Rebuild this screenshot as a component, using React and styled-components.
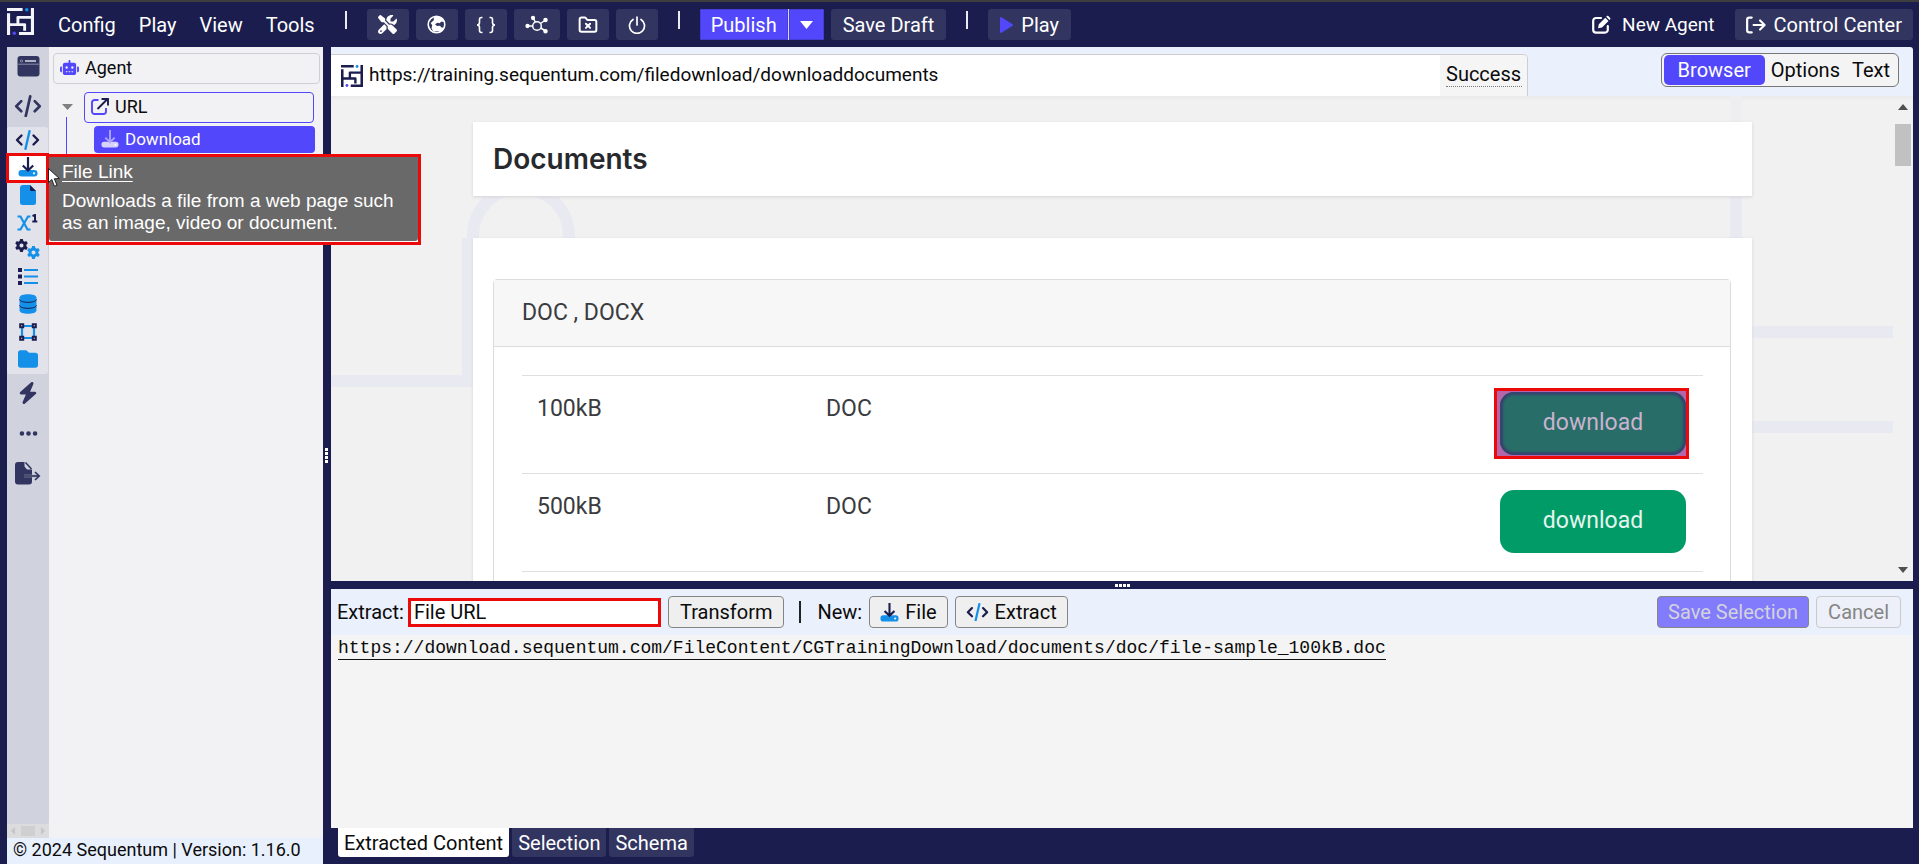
import React from "react";
import styled, { createGlobalStyle, css } from "styled-components";
import { FaRobot, FaFolder, FaEllipsis, FaBolt, FaGear, FaScrewdriverWrench } from "react-icons/fa6";
import { LuFolderX } from "react-icons/lu";

const navy = "#1a1d4d";
const violet = "#5247fa";
const blue = "#1590e9";
const red = "#ec0909";
const slate = "#32355f";

const Global = createGlobalStyle`
  *, *::before, *::after { box-sizing: border-box; }
  body { margin: 0; background: ${navy}; font-family: Roboto, "Liberation Sans", sans-serif; font-size: 20px; color: #0b0b0b; }
  button, input { font: inherit; color: inherit; margin: 0; }
  button { cursor: pointer; }
  svg { display: block; flex: none; }
  h1, h2, p { margin: 0; font-weight: 400; }
`;

/* ---------- frame ---------- */
const Shell = styled.div`
  height: 100vh;
  display: flex;
  flex-direction: column;
  border-top: 2px solid #3e3e3f;
  background: ${navy};
`;
const TopBar = styled.header`
  height: 45px;
  flex: none;
  display: flex;
  align-items: center;
  padding: 0 6px 6px 7px;
  color: #fff;
`;
const Main = styled.main`
  flex: 1;
  min-height: 0;
  display: flex;
  padding: 0 6px 0 7px;
`;

/* ---------- top bar ---------- */
const Menu = styled.nav`
  display: flex;
  gap: 23px;
  margin: 0 10px 0 24px;
`;
const MenuItem = styled.button`
  border: 0;
  padding: 7px 0 0;
  background: none;
  color: #fff;
  line-height: 24px;
`;
const Divider = styled.span`
  width: 2px;
  height: 18px;
  flex: none;
  background: #e8ecf5;
  margin: 0 20px 4px;
`;
const ToolButton = styled.button`
  height: 31px;
  min-width: 42px;
  border: 0;
  border-radius: 3px;
  background: ${slate};
  color: #fff;
  padding: 0 ${(p) => p.$pad || 11}px;
  display: flex;
  align-items: center;
  justify-content: center;
  gap: 8px;
  white-space: nowrap;
`;
const Group = styled.div`
  display: flex;
  align-items: center;
  gap: ${(p) => p.$gap || 7}px;
  padding-top: 6px;
`;
const Split = styled.div`
  display: flex;
  gap: 1px;
  background: #d8d8ff;
  border-radius: 3px;
  overflow: hidden;
`;
const SplitButton = styled.button`
  border: 1px solid #463cd8;
  background: ${violet};
  color: #fff;
  height: 31px;
  width: ${(p) => p.$w}px;
  padding: 0;
  display: flex;
  align-items: center;
  justify-content: center;
`;
const PlainLink = styled.a`
  color: #fff;
  text-decoration: none;
  display: flex;
  align-items: center;
  gap: 11px;
  font-size: 19px;
`;
const Spacer = styled.div`flex: 1;`;

/* ---------- left side ---------- */
const Left = styled.section`
  width: 316px;
  flex: none;
  display: flex;
  flex-direction: column;
  background: #f2f2f5;
  position: relative;
`;
const LeftBody = styled.div`
  flex: 1;
  min-height: 0;
  display: flex;
`;
const Rail = styled.div`
  width: 42px;
  display: flex;
  flex-direction: column;
  background: #dcdcdf;
`;
const RailIcons = styled.div`
  flex: 1;
  background: #d0d3dd;
  border-radius: 0 0 3px 0;
  color: ${slate};
`;
const RailButton = styled.button`
  border: 0;
  background: none;
  padding: 0 0 2px;
  width: 42px;
  height: 40px;
  display: flex;
  align-items: center;
  justify-content: center;
`;
const SubRail = styled.div`
  height: 247px;
  width: 41px;
  background: #e2e3ea;
  border-radius: 3px;
  display: flex;
  flex-direction: column;
`;
const SubButton = styled.button`
  flex: 1;
  min-height: 0;
  border: 0;
  background: none;
  padding: 0 0 2px;
  display: flex;
  align-items: center;
  justify-content: center;
  ${(p) => p.$active && css`
    background: #fff;
    outline: 3px solid ${red};
    outline-offset: -2px;
    z-index: 1;
  `}
`;
const RailScroll = styled.div`
  height: 14px;
  display: flex;
  align-items: center;
  justify-content: center;
  gap: 6px;
`;
const RailThumb = styled.i`
  width: 14px;
  height: 10px;
  background: #cfcfcf;
`;
const Tree = styled.div`
  flex: 1;
  padding: 6px 3px 0 4px;
  font-size: 18px;
`;
const TreeBox = styled.div`
  display: flex;
  align-items: center;
  height: 31px;
  border-radius: 4px;
  padding: 0 6px 2px;
  gap: 6px;
  border: 1px solid ${(p) => (p.$accent ? violet : "#cfcfd6")};
`;
const TreeRow = styled.div`
  display: grid;
  grid-template-columns: 31px 1fr;
  padding-right: 6px;
  margin-top: 8px;
`;
const Guide = styled.div`
  display: flex;
  flex-direction: column;
  align-items: flex-start;
  padding: 12px 0 0 9px;
`;
const GuideLine = styled.i`
  width: 1px;
  height: 37px;
  background: ${violet};
  margin: 7px 0 0 4px;
`;
const TreeChild = styled.div`
  display: flex;
  align-items: center;
  height: 27px;
  margin: 3px -1px 0 10px;
  padding: 0 7px 2px;
  gap: 6px;
  border-radius: 4px;
  background: ${violet};
  color: #fff;
  font-size: 17px;
`;
const Footer = styled.footer`
  height: 26px;
  background: #e9f0fd;
  font-size: 18px;
  line-height: 24px;
  padding-left: 6px;
  white-space: nowrap;
`;
const Tooltip = styled.div`
  position: absolute;
  left: 39px;
  top: 107px;
  width: 375px;
  height: 91px;
  border: 3px solid ${red};
  background: #fff;
  z-index: 3;
  color: #fff;
  font-family: "Liberation Sans", Arial, sans-serif;
  font-size: 19px;
  line-height: 22px;
`;
const TooltipBody = styled.div`
  background: #696969;
  border-radius: 0 0 3px 3px;
  height: 84px;
  padding: 4px 13px;
  h2 { font-size: 19px; text-decoration: underline; text-underline-offset: 3px; margin-bottom: 7px; line-height: 22px; }
`;
const Cursor = styled.svg`
  position: absolute;
  left: 41px;
  top: 121px;
  z-index: 4;
`;

/* ---------- splitters ---------- */
const Grip = styled.div`
  flex: none;
  display: flex;
  align-items: center;
  justify-content: center;
  flex-direction: ${(p) => (p.$vertical ? "column" : "row")};
  gap: 1px;
  ${(p) => (p.$vertical ? "width: 8px; padding-right: 1px;" : "height: 8px;")}
  i { width: 3px; height: 3px; background: #fff; }
`;

/* ---------- right side ---------- */
const Right = styled.section`
  flex: 1;
  min-width: 0;
  display: flex;
  flex-direction: column;
`;
const AddressRow = styled.div`
  height: 49px;
  flex: none;
  display: flex;
  background: #ebf0fd;
  border-radius: 0 3px 0 0;
  padding-top: 7px;
`;
const Address = styled.div`
  flex: 0 1 1197px;
  display: flex;
  border: solid #cdcdd2;
  border-width: 1px 1px 0 0;
  border-radius: 0 5px 0 0;
  background: #fff;
  overflow: hidden;
`;
const LogoSlot = styled.span`
  display: flex;
  align-items: center;
  padding-left: 10px;
`;
const AddressText = styled.input`
  flex: 1;
  min-width: 0;
  border: 0;
  padding: 0 0 2px 6px;
  font-size: 19px;
  background: none;
  outline: none;
`;
const Status = styled.div`
  width: 87px;
  background: #f5f5f5;
  padding: 8px 5px 0 6px;
  span { display: block; line-height: 23px; border-bottom: 1px dotted #777; }
`;
const Tabs = styled.div`
  margin: -1px 14px 0 0;
  height: 34px;
  display: flex;
  align-items: center;
  background: #f4f4f4;
  border: 1px solid #777;
  border-radius: 6px;
  padding: 0 2px;
`;
const Tab = styled.button`
  height: 30px;
  border: 0;
  border-radius: 5px;
  padding: 0 ${(p) => (p.$on ? 14 : 6)}px;
  background: ${(p) => (p.$on ? violet : "transparent")};
  color: ${(p) => (p.$on ? "#fff" : "inherit")};
`;
const Viewport = styled.div`
  flex: 1;
  min-height: 0;
  display: flex;
  position: relative;
  overflow: hidden;
  background: #f1f1f1;
  box-shadow: inset 0 3px 3px #ebebeb;
  color: #3a3b3e;
  font-size: 23px;
`;
const Decor = styled.svg`
  position: absolute;
  inset: 0;
  width: 100%;
  height: 100%;
`;
const Doc = styled.div`
  flex: 1;
  position: relative;
  padding: 26px 143px 0 142px;
`;
const TitleCard = styled.div`
  background: #fff;
  height: 74px;
  padding: 0 20px;
  box-shadow: 0 1px 3px #d4d4d8;
  h1 { font-family: Inter, Roboto, sans-serif; font-weight: 600; font-size: 28px; line-height: 74px; color: #28292d; }
`;
const BodyCard = styled.div`
  background: #fff;
  margin-top: 42px;
  padding: 41px 21px 0 20px;
  box-shadow: 0 1px 3px #d4d4d8;
  height: 600px;
`;
const Panel = styled.div`
  border: 1px solid #dcdcde;
  border-radius: 4px;
  height: 540px;
`;
const PanelHead = styled.div`
  height: 67px;
  background: #f7f7f7;
  border-bottom: 1px solid #dcdcde;
  padding-left: 28px;
  line-height: 65px;
`;
const Table = styled.table`
  width: calc(100% - 55px);
  margin: 28px 27px 0 28px;
  border-collapse: collapse;
  table-layout: fixed;
  td { height: 98px; padding: 18px 15px; border-top: 1px solid #dfdfe1; vertical-align: top; line-height: 30px; }
  td:first-child { width: 289px; }
  td:last-child { width: 240px; padding: 16px 17px 0 0; }
`;
const Pick = styled.div`
  position: relative;
  z-index: 0;
  width: 186px;
  margin-left: auto;
`;
const Download = styled.a`
  display: block;
  height: 63px;
  border-radius: 14px;
  background: ${(p) => (p.$picked ? "#286d67" : "#009b67")};
  color: ${(p) => (p.$picked ? "#c9b3cf" : "#e4f5ee")};
  line-height: 62px;
  text-align: center;
  text-decoration: none;
  ${(p) => p.$picked && css`box-shadow: inset 0 0 2px 3px #36446f;`}
`;
const PickFrame = styled.div`
  position: absolute;
  inset: -4px -3px -4px -6px;
  border: 3px solid ${red};
  background: #b566ab;
  z-index: -1;
`;
const ScrollBar = styled.div`
  width: 18px;
  flex: none;
  position: relative;
  display: flex;
  flex-direction: column;
  padding: 8px 3px 8px 0;
  justify-content: space-between;
  align-items: center;
`;
const Thumb = styled.i`
  width: 16px;
  height: 42px;
  background: #c1c1c1;
  margin: 14px 0 auto;
`;
const ExtractBar = styled.form`
  height: 46px;
  flex: none;
  display: flex;
  align-items: center;
  background: #ebf0fd;
  padding: 0 12px 0 6px;
  white-space: nowrap;
`;
const Label = styled.label`margin-right: 4px;`;
const Field = styled.input`
  width: 253px;
  height: 29px;
  border: 3px solid ${red};
  background: #fff;
  padding: 0 3px;
  margin-right: 7px;
  outline: none;
`;
const FormButton = styled.button`
  height: 32px;
  border: 1px solid ${(p) => (p.$muted ? "#c9c9c9" : "#858585")};
  border-radius: 4px;
  background: ${(p) => p.$bg || "#efefef"};
  color: ${(p) => p.$fg || "#0b0b0b"};
  padding: 0 ${(p) => p.$pad || 10}px;
  display: flex;
  align-items: center;
  gap: 6px;
`;
const Bar = styled.span`
  width: 2px;
  height: 22px;
  background: #222;
  margin: 0 16px 0 15px;
`;
const FormGroup = styled.div`
  display: flex;
  align-items: center;
  gap: 7px;
`;
const Output = styled.div`
  height: 193px;
  flex: none;
  background: #f4f4f4;
  padding: 3px 7px 0;
  font-family: "Liberation Mono", monospace;
  font-size: 18px;
  line-height: 21px;
  span { display: inline-block; border-bottom: 1px solid #111; }
`;
const BottomTabs = styled.div`
  height: 36px;
  flex: none;
  display: flex;
  align-items: flex-start;
  gap: 3px;
  padding-left: 7px;
`;
const BottomTab = styled.button`
  height: 29px;
  border: 0;
  border-radius: 0 0 3px 3px;
  padding: 0 6px;
  background: ${(p) => (p.$on ? "#fff" : slate)};
  color: ${(p) => (p.$on ? "#0b0b0b" : "#fff")};
`;

/* ---------- icons ---------- */
const Logo = ({ size, ink }) => (
  <svg width={size} height={size} viewBox="0 0 26 26" fill="none" stroke={ink} strokeWidth="3">
    <path d="M0 1.500h15M1.500 5v21M24.500 0v26M11.500 24.500H26" />
    <path d="M24 9h-13.500v6M1.500 16H17v6" strokeWidth="2.800" strokeLinejoin="round" />
    <circle cx="19" cy="1.700" r="1.700" fill={blue} stroke="none" />
    <circle cx="7" cy="24.300" r="1.700" fill={violet} stroke="none" />
  </svg>
);
const Code = ({ w = 26, slash = blue, ink = navy }) => (
  <svg width={w} height={w * 0.8} viewBox="0 0 25 20" fill="none" strokeWidth="2.400" strokeLinecap="round" strokeLinejoin="round">
    <path d="M6.500 5.500L2 10l4.500 4.500M18.500 5.500L23 10l-4.500 4.500" stroke={ink} />
    <path d="M14.500 1.200l-4 17.600" stroke={slash} />
  </svg>
);
const Drive = ({ ink = navy, base = blue, size = 20 }) => (
  <svg width={size} height={size} viewBox="0 0 20 20" fill="none">
    <rect x="0.500" y="13" width="19" height="6.500" rx="3" fill={base} />
    <path d="M10 0v13M4.800 8.500L10 13.500l5.200-5" stroke={ink} strokeWidth="2.200" />
    <circle cx="16" cy="16.300" r="1.100" fill="#fff" />
  </svg>
);
const WindowIcon = () => (
  <svg width="23" height="21" viewBox="0 0 23 21">
    <rect x="0.500" width="22" height="20.500" rx="3" fill={slate} />
    <path d="M1 8.200h21" stroke="#9fa3b8" strokeWidth="0.800" />
    <path d="M8 5h11" stroke="#d0d3dd" strokeWidth="1.600" />
    <circle cx="4.500" cy="5" r="1.100" fill="none" stroke="#a9adc0" strokeWidth="0.700" />
  </svg>
);
const FileIcon = () => (
  <svg width="16" height="20" viewBox="0 0 16 20">
    <path d="M3 0h7l6 6v11.500a2.500 2.500 0 0 1-2.500 2.500h-11A2.500 2.500 0 0 1 0 17.500V3a3 3 0 0 1 3-3z" fill={blue} />
    <path d="M10 0l6 6h-4.500A1.500 1.500 0 0 1 10 4.500z" fill={navy} />
  </svg>
);
const Exponent = () => (
  <svg width="21" height="17" viewBox="0 0 21 17" fill="none">
    <path d="M0.500 2.500h3L10.500 15.500h3M13.500 2.500h-2.500L3.500 15.500h-3" stroke={blue} strokeWidth="2.200" />
    <path d="M15.500 2l2.500-1V7.500M15.300 7.500h5" stroke={navy} strokeWidth="2" />
  </svg>
);
const Gears = () => (
  <svg width="25" height="20" viewBox="0 0 25 20">
    <FaGear size={13} color={navy} />
    <FaGear size={13} color={blue} x="12" y="7" />
  </svg>
);
const List = () => (
  <svg width="20" height="17" viewBox="0 0 20 17">
    <path d="M0 0h4v4H0zM0 6.500h4v4H0zM0 13h4v4H0z" fill={navy} />
    <path d="M6 2h14M6 8.500h14M6 15h14" stroke={blue} strokeWidth="1.800" />
  </svg>
);
const Database = () => (
  <svg width="18" height="20" viewBox="0 0 18 20" fill="none">
    <path d="M0.500 4C0.500 1.200 4.500 0.300 9 0.300S17.500 1.200 17.500 4v12c0 2.800-4 3.700-8.500 3.700S0.500 18.800 0.500 16z" fill={blue} />
    <path d="M0.500 5.500C1.500 9.300 16.500 9.300 17.500 5.500M0.500 11.500C1.500 15.300 16.500 15.300 17.500 11.500" stroke={navy} strokeWidth="1" />
  </svg>
);
const Shape = () => (
  <svg width="18" height="18" viewBox="0 0 18 18" fill="none">
    <path d="M3 3h12v12H3z" stroke={blue} strokeWidth="2.200" />
    <path d="M1.200 1.200h3v3h-3zM13.800 1.200h3v3h-3zM1.200 13.800h3v3h-3zM13.800 13.800h3v3h-3z" stroke={navy} strokeWidth="2" fill="#fff" />
  </svg>
);
const ExportIcon = () => (
  <svg width="26" height="23" viewBox="0 0 26 23" fill="none">
    <path d="M3 0h6.500v4.500L12 7.500H17V19.500a3 3 0 0 1-3 3H3a3 3 0 0 1-3-3V3a3 3 0 0 1 3-3z" fill={slate} />
    <path d="M10.500 0.500L16.500 7" stroke={slate} strokeWidth="1.500" />
    <path d="M9 14h14" stroke="#9a9eb3" strokeWidth="2.600" />
    <path d="M9 14h15M20 10l4.200 4-4.200 4" stroke={slate} strokeWidth="1.700" />
  </svg>
);
const OpenIcon = () => (
  <svg width="18" height="17" viewBox="0 0 18 17" fill="none" strokeWidth="1.900">
    <path d="M7.500 2H3.500A2.500 2.500 0 0 0 1 4.500v9A2.500 2.500 0 0 0 3.500 16h9a2.500 2.500 0 0 0 2.500-2.500V10" stroke={violet} />
    <path d="M6.500 11L16 1.500M10.500 1H17v6.500" stroke={navy} />
  </svg>
);
const Globe = () => (
  <svg width="19" height="19" viewBox="0 0 19 19" fill="none">
    <circle cx="9.500" cy="9.500" r="8.300" fill={slate} stroke="#fff" strokeWidth="1.600" />
    <path d="M9.500 1.200a8.300 8.300 0 0 1 8 6l-3-.7-2 1.700-2-.5-2.500 1.500 2 1.800 3-.2 1.500 1.700 2.700.2a8.300 8.300 0 0 1-4 4.400l-2.500-.8-4.200.5-2-3.500.7-3-1.500-2.300L7 5l-.5-2.500z" fill="#fff" />
  </svg>
);
const Braces = () => (
  <svg width="20" height="18" viewBox="0 0 20 18" fill="none" stroke="#fff" strokeWidth="1.600">
    <path d="M6.500 1.500H5.500Q3.500 1.500 3.500 3.500V6.500Q3.500 9 1 9 3.500 9 3.500 11.500V14.500Q3.500 16.500 5.500 16.500H6.500M13.500 1.500H14.500Q16.500 1.500 16.500 3.500V6.500Q16.500 9 19 9 16.500 9 16.500 11.500V14.500Q16.500 16.500 14.500 16.500H13.500" />
  </svg>
);
const Hub = () => (
  <svg width="24" height="20" viewBox="0 0 24 20" fill="#fff" stroke="#fff" strokeWidth="1.500">
    <circle cx="12" cy="11" r="4.300" fill="none" />
    <path d="M3 11h4.700M10.300 7L8.500 3.500M15.500 8.500L20.500 5M15.800 13l4.700 3" />
    <circle cx="2.500" cy="11" r="1.400" /><circle cx="8" cy="3" r="1.400" /><circle cx="20.500" cy="5" r="1.500" /><circle cx="20.500" cy="16.300" r="1.500" />
  </svg>
);
const PowerIcon = () => (
  <svg width="18" height="18" viewBox="0 0 18 18" fill="none" stroke="#fff" strokeWidth="1.700" strokeLinecap="round">
    <path d="M5 3.500A7.500 7.500 0 1 0 13 3.500M9 1v8" />
  </svg>
);
const PlayIcon = () => (
  <svg width="13" height="16" viewBox="0 0 13 16">
    <path d="M1 1l11 7-11 7z" fill={violet} stroke={violet} strokeWidth="2" strokeLinejoin="round" />
  </svg>
);
const Edit = () => (
  <svg width="19" height="19" viewBox="0 0 19 19" fill="none">
    <path d="M9 3H4a2.800 2.800 0 0 0-2.800 2.800v9A2.800 2.800 0 0 0 4 17.600h9a2.800 2.800 0 0 0 2.800-2.800V11" stroke="#fff" strokeWidth="2.200" strokeLinecap="round" />
    <path d="M6 13.200l.8-4 6.500-6.500 3.200 3.200L10 12.400zM14.200 1.800l1-1c.7-.7 3.900 2.500 3.200 3.200l-1 1z" fill="#fff" />
  </svg>
);
const Exit = () => (
  <svg width="20" height="18" viewBox="0 0 21 18" fill="none" stroke="#fff" strokeWidth="2.300" strokeLinecap="round" strokeLinejoin="round">
    <path d="M6 1.200H3.500A2.300 2.300 0 0 0 1.200 3.500v11A2.300 2.300 0 0 0 3.500 16.800H6M8 9h11.500M14.800 4.300L19.500 9l-4.700 4.700" />
  </svg>
);
const Triangle = ({ up, w = 10, h = 6, color = "#505050" }) => (
  <svg width={w} height={h} viewBox="0 0 10 6" preserveAspectRatio="none" fill={color}><path d={up ? "M0 6L5 0l5 6z" : "M0 0h10L5 6z"} /></svg>
);
const SideArrow = ({ left }) => (
  <svg width="4" height="8" viewBox="0 0 4 8" fill="#c6c6c8"><path d={left ? "M4 0v8L0 4z" : "M0 0v8l4-4z"} /></svg>
);

const TOOLS = [
  ["Tools", <FaScrewdriverWrench size={19} />],
  ["Web", <Globe />],
  ["JSON", <Braces />],
  ["Network", <Hub />],
  ["Clear folder", <LuFolderX size={20} strokeWidth={2.4} />],
  ["Power", <PowerIcon />],
];
const COMMANDS = [
  ["Code", <Code w={25} />],
  ["File Link", <Drive />],
  ["File", <FileIcon />],
  ["Calculated", <Exponent />],
  ["Process", <Gears />],
  ["List", <List />],
  ["Database", <Database />],
  ["Region", <Shape />],
  ["Folder", <FaFolder size={20} color={blue} />],
];
const FILES = [["100kB", "DOC", true], ["500kB", "DOC", false], ["", "", null]];
const dots = [0, 1, 2, 3].map((n) => <i key={n} />);

export default function App() {
  return (
    <Shell>
      <Global />
      <TopBar>
        <Logo size={27} ink="#f4f5fb" />
        <Menu>
          {["Config", "Play", "View", "Tools"].map((m) => <MenuItem key={m}>{m}</MenuItem>)}
        </Menu>
        <Divider />
        <Group>
          {TOOLS.map(([name, icon]) => <ToolButton key={name} aria-label={name}>{icon}</ToolButton>)}
        </Group>
        <Divider />
        <Group>
          <Split>
            <SplitButton $w={88}>Publish</SplitButton>
            <SplitButton $w={35} aria-label="Publish options"><Triangle w={13} h={8} color="#fff" /></SplitButton>
          </Split>
          <ToolButton $pad={12}>Save Draft</ToolButton>
        </Group>
        <Divider />
        <Group>
          <ToolButton $pad={12}><PlayIcon />Play</ToolButton>
        </Group>
        <Spacer />
        <Group $gap={20}>
          <PlainLink href="#new"><Edit />New Agent</PlainLink>
          <ToolButton><Exit />Control Center</ToolButton>
        </Group>
      </TopBar>
      <Main>
        <Left>
          <LeftBody>
            <Rail>
              <RailIcons>
                <RailButton aria-label="Browser"><WindowIcon /></RailButton>
                <RailButton aria-label="Commands"><Code w={28} slash={slate} ink={slate} /></RailButton>
                <SubRail>
                  {COMMANDS.map(([name, icon]) => (
                    <SubButton key={name} aria-label={name} $active={name === "File Link"}>{icon}</SubButton>
                  ))}
                </SubRail>
                <RailButton aria-label="Actions"><FaBolt size={22} color={slate} /></RailButton>
                <RailButton aria-label="More"><FaEllipsis size={21} color={slate} /></RailButton>
                <RailButton aria-label="Export"><ExportIcon /></RailButton>
              </RailIcons>
              <RailScroll><SideArrow left /><RailThumb /><SideArrow /></RailScroll>
            </Rail>
            <Tree>
              <TreeBox><FaRobot size={19} color={violet} />Agent</TreeBox>
              <TreeRow>
                <Guide><Triangle w={11} h={6} color="#808080" /><GuideLine /></Guide>
                <div>
                  <TreeBox $accent><OpenIcon />URL</TreeBox>
                  <TreeChild><Drive size={18} ink="#a9a3ff" base="#d6d3ff" />Download</TreeChild>
                </div>
              </TreeRow>
            </Tree>
          </LeftBody>
          <Footer>© 2024 Sequentum | Version: 1.16.0</Footer>
          <Tooltip role="tooltip">
            <TooltipBody>
              <h2>File Link</h2>
              <p>Downloads a file from a web page such as an image, video or document.</p>
            </TooltipBody>
          </Tooltip>
          <Cursor width="12" height="20" viewBox="0 0 12 20">
            <path d="M0.500 0.500v14l3.300-3 2.600 6.700 2.600-1-2.700-6.400 5-.3z" fill="#fff" stroke="#111" strokeWidth="0.900" />
          </Cursor>
        </Left>
        <Grip $vertical>{dots}</Grip>
        <Right>
          <AddressRow>
            <Address>
              <LogoSlot><Logo size={22} ink={navy} /></LogoSlot>
              <AddressText aria-label="Address" defaultValue="https://training.sequentum.com/filedownload/downloaddocuments" />
              <Status><span>Success</span></Status>
            </Address>
            <Spacer />
            <Tabs>
              <Tab $on>Browser</Tab>
              <Tab>Options</Tab>
              <Tab>Text</Tab>
            </Tabs>
          </AddressRow>
          <Viewport>
            <Decor viewBox="0 0 1582 485" preserveAspectRatio="xMinYMin slice" fill="none" stroke="#e9e9f1">
              <path d="M0 285H137V142M142 150V140a48 48 0 0 1 96 0v50" strokeWidth="12" />
              <path d="M1405 98V236H1562M1405 331H1562" strokeWidth="12" />
              <path d="M1405 0V98" stroke="#eeeef1" strokeWidth="12" />
            </Decor>
            <Doc>
              <TitleCard><h1>Documents</h1></TitleCard>
              <BodyCard>
                <Panel>
                  <PanelHead>DOC , DOCX</PanelHead>
                  <Table>
                    <tbody>
                      {FILES.map(([size, type, picked], i) => (
                        <tr key={i}>
                          <td>{size}</td>
                          <td>{type}</td>
                          <td>
                            {picked !== null && (
                              <Pick>
                                {picked && <PickFrame />}
                                <Download href="#file" $picked={picked}>download</Download>
                              </Pick>
                            )}
                          </td>
                        </tr>
                      ))}
                    </tbody>
                  </Table>
                </Panel>
              </BodyCard>
            </Doc>
            <ScrollBar><Triangle up /><Thumb /><Triangle /></ScrollBar>
          </Viewport>
          <Grip>{dots}</Grip>
          <ExtractBar onSubmit={(e) => e.preventDefault()}>
            <Label htmlFor="extract">Extract:</Label>
            <Field id="extract" defaultValue="File URL" />
            <FormButton type="button" $pad={11}>Transform</FormButton>
            <Bar />
            <FormGroup>
              <span>New:</span>
              <FormButton type="button"><Drive size={19} />File</FormButton>
              <FormButton type="button"><Code w={23} />Extract</FormButton>
            </FormGroup>
            <Spacer />
            <FormGroup>
              <FormButton type="submit" $bg="#827bfb" $fg="#d3d3dd">Save Selection</FormButton>
              <FormButton type="button" $pad={11} $muted $bg="#edf0f8" $fg="#858585">Cancel</FormButton>
            </FormGroup>
          </ExtractBar>
          <Output><span>https://download.sequentum.com/FileContent/CGTrainingDownload/documents/doc/file-sample_100kB.doc</span></Output>
          <BottomTabs>
            <BottomTab $on>Extracted Content</BottomTab>
            <BottomTab>Selection</BottomTab>
            <BottomTab>Schema</BottomTab>
          </BottomTabs>
        </Right>
      </Main>
    </Shell>
  );
}
